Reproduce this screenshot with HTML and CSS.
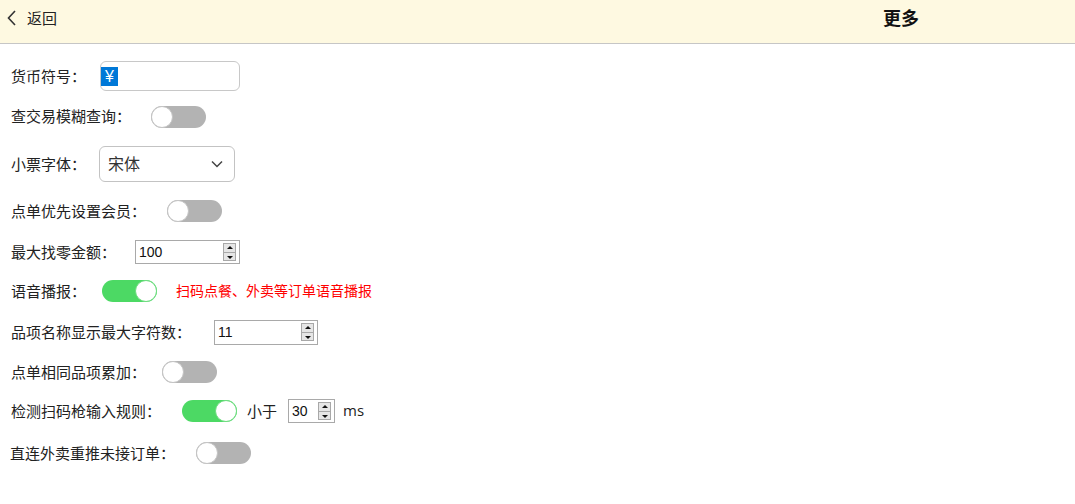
FILE: index.html
```html
<!DOCTYPE html>
<html lang="zh">
<head>
<meta charset="utf-8">
<link rel="stylesheet" href="styles.css">
</head>
<body>
<div class="header">
  <a class="back">
    <svg class="chev" width="10" height="16" viewBox="0 0 10 16"><polyline points="8,1 1.5,8 8,15" fill="none" stroke="#333" stroke-width="1.6"/></svg>
    <span>返回</span>
  </a>
  <div class="title">更多</div>
</div>
<div class="content">
  <div class="row r1"><span class="label">货币符号：</span><div class="text-input g14"><span class="sel">¥</span></div></div>
  <div class="row r2"><span class="label">查交易模糊查询：</span><span class="toggle g20"><span class="knob"></span></span></div>
  <div class="row r3"><span class="label">小票字体：</span><div class="select g13"><span>宋体</span><svg width="12" height="8" viewBox="0 0 12 8"><polyline points="1,1.5 6,6.5 11,1.5" fill="none" stroke="#444" stroke-width="1.5"/></svg></div></div>
  <div class="row r4"><span class="label">点单优先设置会员：</span><span class="toggle g21"><span class="knob"></span></span></div>
  <div class="row r5"><span class="label">最大找零金额：</span><div class="num g19 w105"><span class="val">100</span><span class="spin"><span class="up"></span><span class="dn"></span></span></div></div>
  <div class="row r6"><span class="label">语音播报：</span><span class="toggle on g16"><span class="knob"></span></span><span class="hint">扫码点餐、外卖等订单语音播报</span></div>
  <div class="row r7"><span class="label">品项名称显示最大字符数：</span><div class="num g23 w104 h25"><span class="val">11</span><span class="spin"><span class="up"></span><span class="dn"></span></span></div></div>
  <div class="row r8"><span class="label">点单相同品项累加：</span><span class="toggle g16"><span class="knob"></span></span></div>
  <div class="row r9"><span class="label">检测扫码枪输入规则：</span><span class="toggle on g21"><span class="knob"></span></span><span class="unit lt">小于</span><div class="num w47 g11"><span class="val">30</span><span class="spin"><span class="up"></span><span class="dn"></span></span></div><span class="unit ms">ms</span></div>
  <div class="row r10"><span class="label l10">直连外卖重推未接订单：</span><span class="toggle g21"><span class="knob"></span></span></div>
</div>
</body>
</html>
```
FILE: styles.css
```css
* { box-sizing: border-box; }
body {
  margin: 0;
  background: #fff;
  font-family: "Noto Sans CJK SC", "Liberation Sans", sans-serif;
  color: #222;
  width: 1075px;
  height: 504px;
  overflow: hidden;
}
.header {
  height: 44px;
  background: #fef9e1;
  border-bottom: 1px solid #c6c6c6;
  display: flex;
  align-items: center;
  padding-bottom: 9px;
}
.back {
  display: flex;
  align-items: center;
  padding-left: 7px;
  font-size: 15px;
  color: #222;
}
.back span { margin-left: 10px; }
.chev { margin-top: 1px; }
.title {
  margin-left: auto;
  margin-right: 156px;
  font-size: 18px;
  font-weight: bold;
  color: #111;
}
.content {
  padding-top: 12px;
  padding-left: 11px;
}
.row {
  display: flex;
  align-items: center;
  font-size: 15px;
}
.label { white-space: nowrap; margin-top: -2px; }
.r1 { height: 40px; }
.r2 { height: 41px; }
.r3 { height: 54px; }
.r4 { height: 40px; }
.r5 { height: 42px; }
.r6 { height: 36px; }
.r7 { height: 46px; }
.r8 { height: 34px; }
.r9 { height: 44px; }
.r10 { height: 40px; }
.l10 { margin-left: -1px; }
.g11 { margin-left: 11px; }
.g13 { margin-left: 13px; }
.g14 { margin-left: 14px; }
.g16 { margin-left: 16px; }
.g19 { margin-left: 19px; }
.g20 { margin-left: 20px; }
.g21 { margin-left: 21px; }
.g23 { margin-left: 23px; }

.text-input {
  width: 140px;
  height: 30px;
  border: 1px solid #c8c8c8;
  border-radius: 6px;
  display: flex;
  align-items: center;
}
.sel {
  background: #0078d7;
  color: #fff;
  font-size: 16px;
  font-family: "Liberation Sans", sans-serif;
  line-height: 19px;
  height: 19px;
  padding: 0 4px;
}
.select {
  width: 136px;
  height: 36px;
  border: 1px solid #c3c3c3;
  border-radius: 6px;
  display: flex;
  align-items: center;
  justify-content: space-between;
  padding: 0 11px 2px 8px;
  font-size: 16px;
  color: #333;
}
.select svg { margin-top: 2px; }
.toggle {
  position: relative;
  width: 55px;
  height: 22px;
  border-radius: 11px;
  background: #b3b3b3;
  flex: none;
}
.toggle .knob {
  position: absolute;
  left: 0;
  top: 0;
  width: 22px;
  height: 22px;
  border-radius: 50%;
  background: #fff;
  border: 1px solid #c4c4c4;
}
.toggle.on { background: #4cd964; }
.toggle.on .knob { left: auto; right: 0; border-color: #6ddc7f; }
.hint {
  margin-left: 19px;
  margin-top: -2px;
  color: #ff0000;
  font-size: 14px;
}
.num {
  height: 24px;
  border: 1px solid #a9a9a9;
  display: flex;
  align-items: center;
  justify-content: space-between;
  padding: 0 3px 0 3px;
  font-family: "Liberation Sans", sans-serif;
  font-size: 14px;
  color: #111;
}
.w105 { width: 105px; }
.w104 { width: 104px; }
.w47 { width: 47px; }
.h25 { height: 25px; }
.spin {
  display: flex;
  flex-direction: column;
  width: 13px;
  height: 18px;
}
.spin span {
  flex: 1;
  background: #e6e6e6;
  border: 1px solid #a8a8a8;
  position: relative;
}
.spin .up { border-bottom: none; }
.spin span::after {
  content: "";
  position: absolute;
  left: 3px;
  width: 0;
  height: 0;
  border-left: 3px solid transparent;
  border-right: 3px solid transparent;
}
.spin .up::after { top: 2px; border-bottom: 3px solid #111; }
.spin .dn::after { top: 3px; border-top: 3px solid #111; }
.unit { font-size: 15px; color: #222; }
.lt { margin-left: 10px; margin-top: -2px; }
.ms { margin-left: 8px; font-family: "Open Sans", "Liberation Sans", sans-serif; margin-top: -2px; }
```
